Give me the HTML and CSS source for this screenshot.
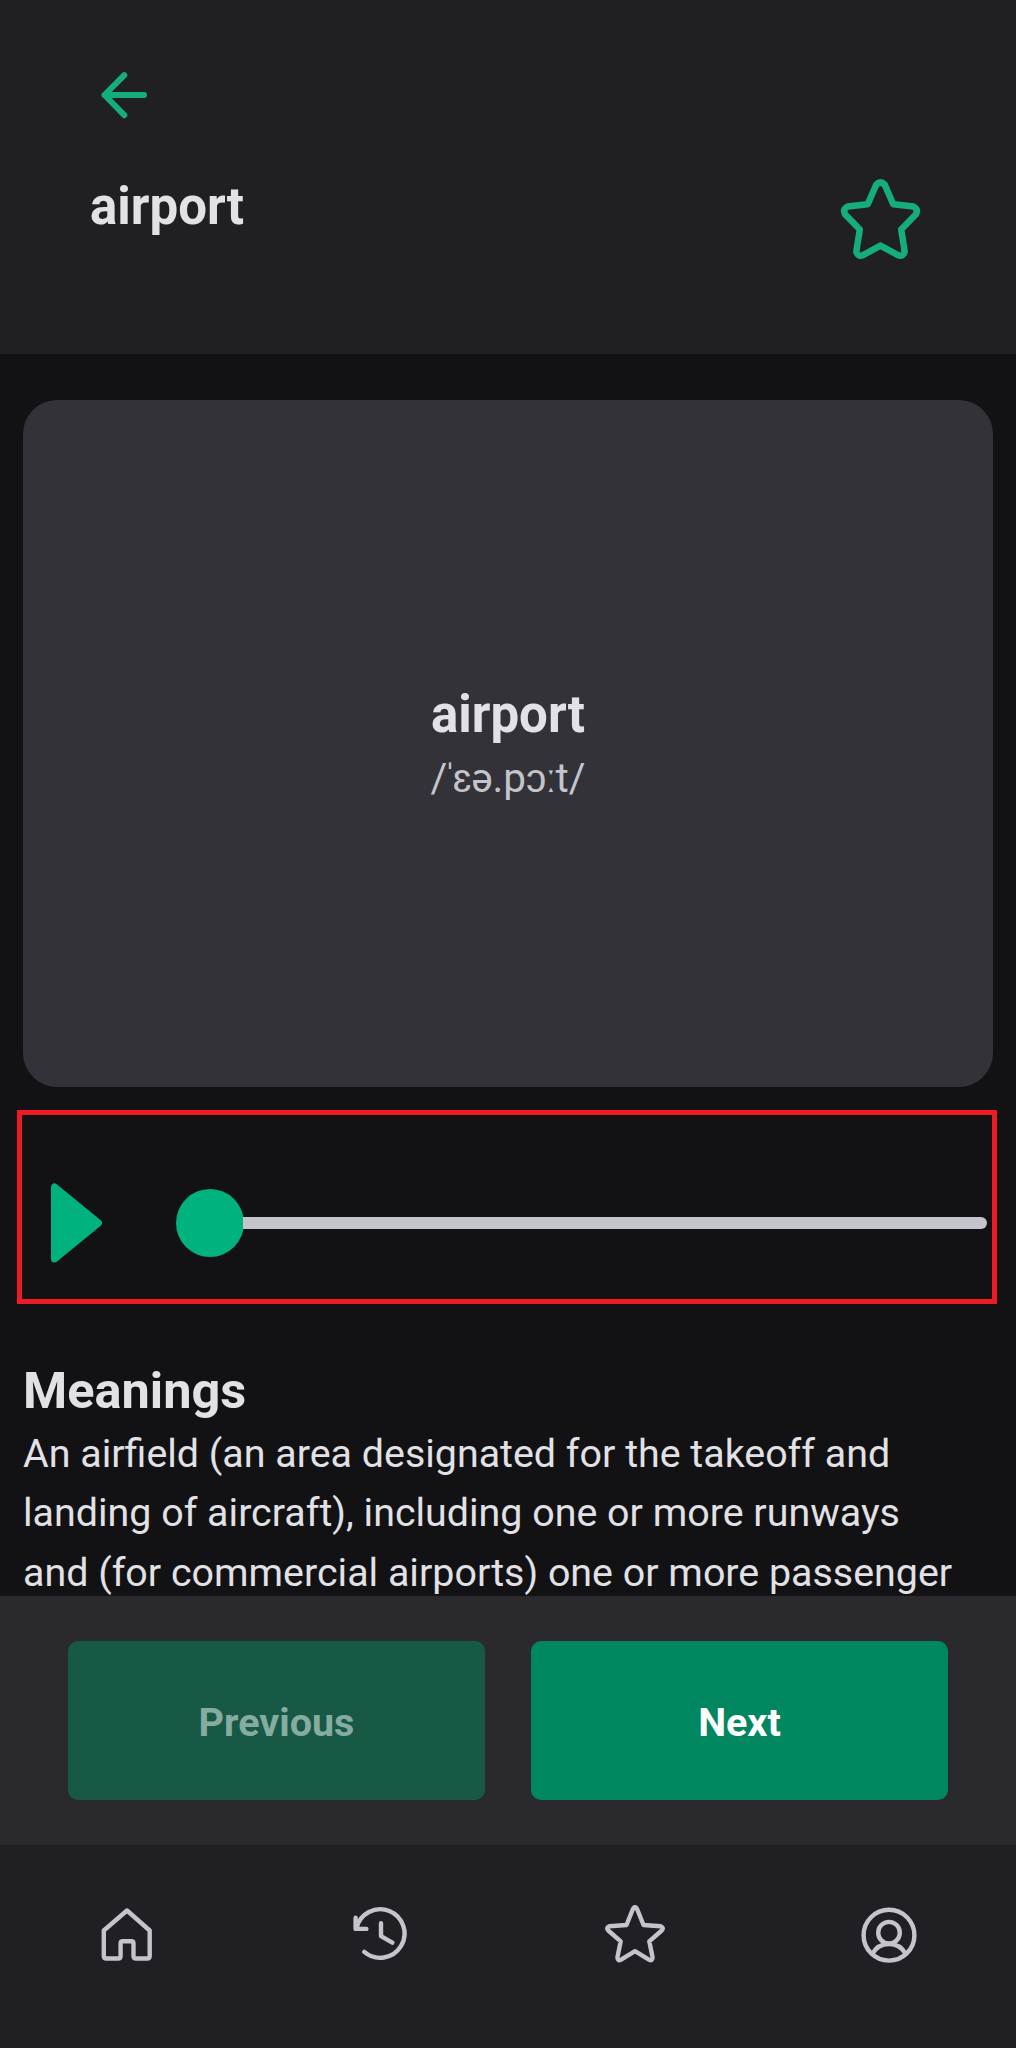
FILE: index.html
```html
<!DOCTYPE html>
<html lang="en">
<head>
<meta charset="utf-8">
<title>airport</title>
<link rel="stylesheet" href="styles.css">
</head>
<body>
<div class="screen">
  <header class="header">
    <svg class="back" viewBox="97 68 54 54"><path d="M144 95H104.5M124.3 75.2L104.5 95L124.3 115.2"/></svg>
    <div class="title-row">
      <h1 class="word">airport</h1>
      <svg class="favorite" viewBox="840 176 82 86"><path d="M876.3 184.6Q880.5 180.5 884.7 184.6L893.3 204.2L913.5 206.6Q918.5 209.2 916 214.2L901.2 229.5L904.7 251.5Q903.5 257 898 255.2L880.5 245.6L863 255.2Q857.5 257 856.3 251.5L859.8 229.5L845 214.2Q842.5 209.2 847.5 206.6L867.7 204.2Z"/></svg>
    </div>
  </header>
  <main class="content">
    <section class="card">
      <div class="word">airport</div>
      <div class="phonetic">/<span class="stress">ˈ</span>ɛə.pɔ<span class="length">ː</span>t/</div>
    </section>
    <section class="player">
      <svg class="play" viewBox="51 1183 51 80"><path d="M54.5 1187V1259L98.5 1223Z"/></svg>
      <div class="slider"><span class="thumb"></span><span class="track"></span></div>
    </section>
    <section class="meanings">
      <h2 class="word heading">Meanings</h2>
      <p class="definition">An airfield (an area designated for the takeoff and<br>landing of aircraft), including one or more runways<br>and (for commercial airports) one or more passenger</p>
    </section>
  </main>
  <div class="actions">
    <button class="button button-disabled" disabled>Previous</button>
    <button class="button">Next</button>
  </div>
  <nav class="tabs">
    <svg class="tab" viewBox="97 1905 60 60"><path d="M127 1910.5L149.7 1930.5V1956Q149.7 1958.5 147.2 1958.5H136Q133.5 1958.5 133.5 1956V1943.5Q133.5 1941.3 131.3 1941.3H122.8Q120.6 1941.3 120.6 1943.5V1956Q120.6 1958.5 118.1 1958.5H106.3Q103.8 1958.5 103.8 1956V1930.5Z"/></svg>
    <svg class="tab" viewBox="351 1905 60 60"><path d="M355.6 1917V1928.2H366.4M356.5 1927.5A24.3 24.3 0 1 1 364.3 1951.2M381 1922.5V1935.5L392.3 1942" transform="translate(0 .7)"/></svg>
    <svg class="tab" viewBox="605 1905 60 60"><path d="M633 1908.8Q635 1905.5 637 1908.8L643.5 1925L660.7 1926.2Q664.3 1927.8 661.7 1930.5L649.3 1941.3L652.6 1957.5Q652.4 1961.5 648.9 1959.6L635 1951.2L621.1 1959.6Q617.6 1961.5 617.4 1957.5L620.7 1941.3L608.3 1930.5Q605.7 1927.8 609.3 1926.2L626.5 1925Z"/></svg>
    <svg class="tab" viewBox="859 1905 60 60"><circle cx="889" cy="1935.2" r="25.4"/><circle cx="889" cy="1932.7" r="10.8"/><path d="M872.3 1954A19 19 0 0 1 905.7 1954"/></svg>
  </nav>
</div>
</body>
</html>
```
FILE: styles.css
```css
* { box-sizing: border-box; }
body { margin: 0; background: #121214; font-family: Roboto, sans-serif; color: #e1e1e6; }
.screen { display: flex; flex-direction: column; width: 1016px; height: 2048px; overflow: hidden; }
svg { display: block; fill: none; stroke-linecap: round; stroke-linejoin: round; }
.word { margin: 0; font-size: 51px; font-weight: 700; line-height: 60px; }
.heading { font-size: 50.5px; }
.header { flex: none; height: 354px; padding: 68px 94px 0 90px; background: #202024; }
.back { width: 54px; height: 54px; margin-left: 7px; stroke: #16ad7c; stroke-width: 6; }
.title-row { display: flex; justify-content: space-between; align-items: flex-start; margin-top: 54px; }
.title-row .word { margin-top: 1px; }
.favorite { width: 82px; height: 86px; stroke: #16ad7c; stroke-width: 6.5; }
.content { flex: 1; min-height: 0; overflow: hidden; padding: 46px 17px 0; }
.card { display: flex; flex-direction: column; align-items: center; height: 687px; margin: 0 6px; padding-top: 285px; border-radius: 34px; background: #323238; }
.phonetic { margin-top: 9px; font-size: 40.5px; line-height: 48px; color: #c4c4cc; }
.stress { margin: 0 -4px; }
.length { margin: 0 -1px; }
.player { display: flex; align-items: center; width: 980px; height: 194px; margin-top: 23px; padding: 32px 5px 0 29px; border: 5px solid #ed1c24; }
.play { width: 51px; height: 80px; fill: #00b37e; stroke: #00b37e; stroke-width: 7; }
.slider { display: flex; align-items: center; flex: 1; margin-left: 74px; }
.thumb { width: 68px; height: 68px; border-radius: 50%; background: #00b37e; }
.track { flex: 1; height: 12px; margin-left: -1px; border-radius: 0 6px 6px 0; background: #c4c4cc; }
.meanings { margin: 57px 6px 0; }
.definition { margin: 3px 0 0; font-size: 39.4px; line-height: 59.3px; white-space: nowrap; }
.actions { flex: none; display: flex; gap: 46px; height: 249px; padding: 45px 68px; background: #29292e; }
.button { flex: 1; border: 0; border-radius: 10px; padding: 5px 0 0; background: #00875f; color: #fff; font: 700 39.5px/48px Roboto, sans-serif; }
.button-disabled { background: #185946; color: #86aca1; }
.tabs { flex: none; display: flex; justify-content: space-around; height: 203px; padding-top: 60px; background: #202024; }
.tab { width: 60px; height: 60px; stroke: #c4c4cc; stroke-width: 4.4; }
```
